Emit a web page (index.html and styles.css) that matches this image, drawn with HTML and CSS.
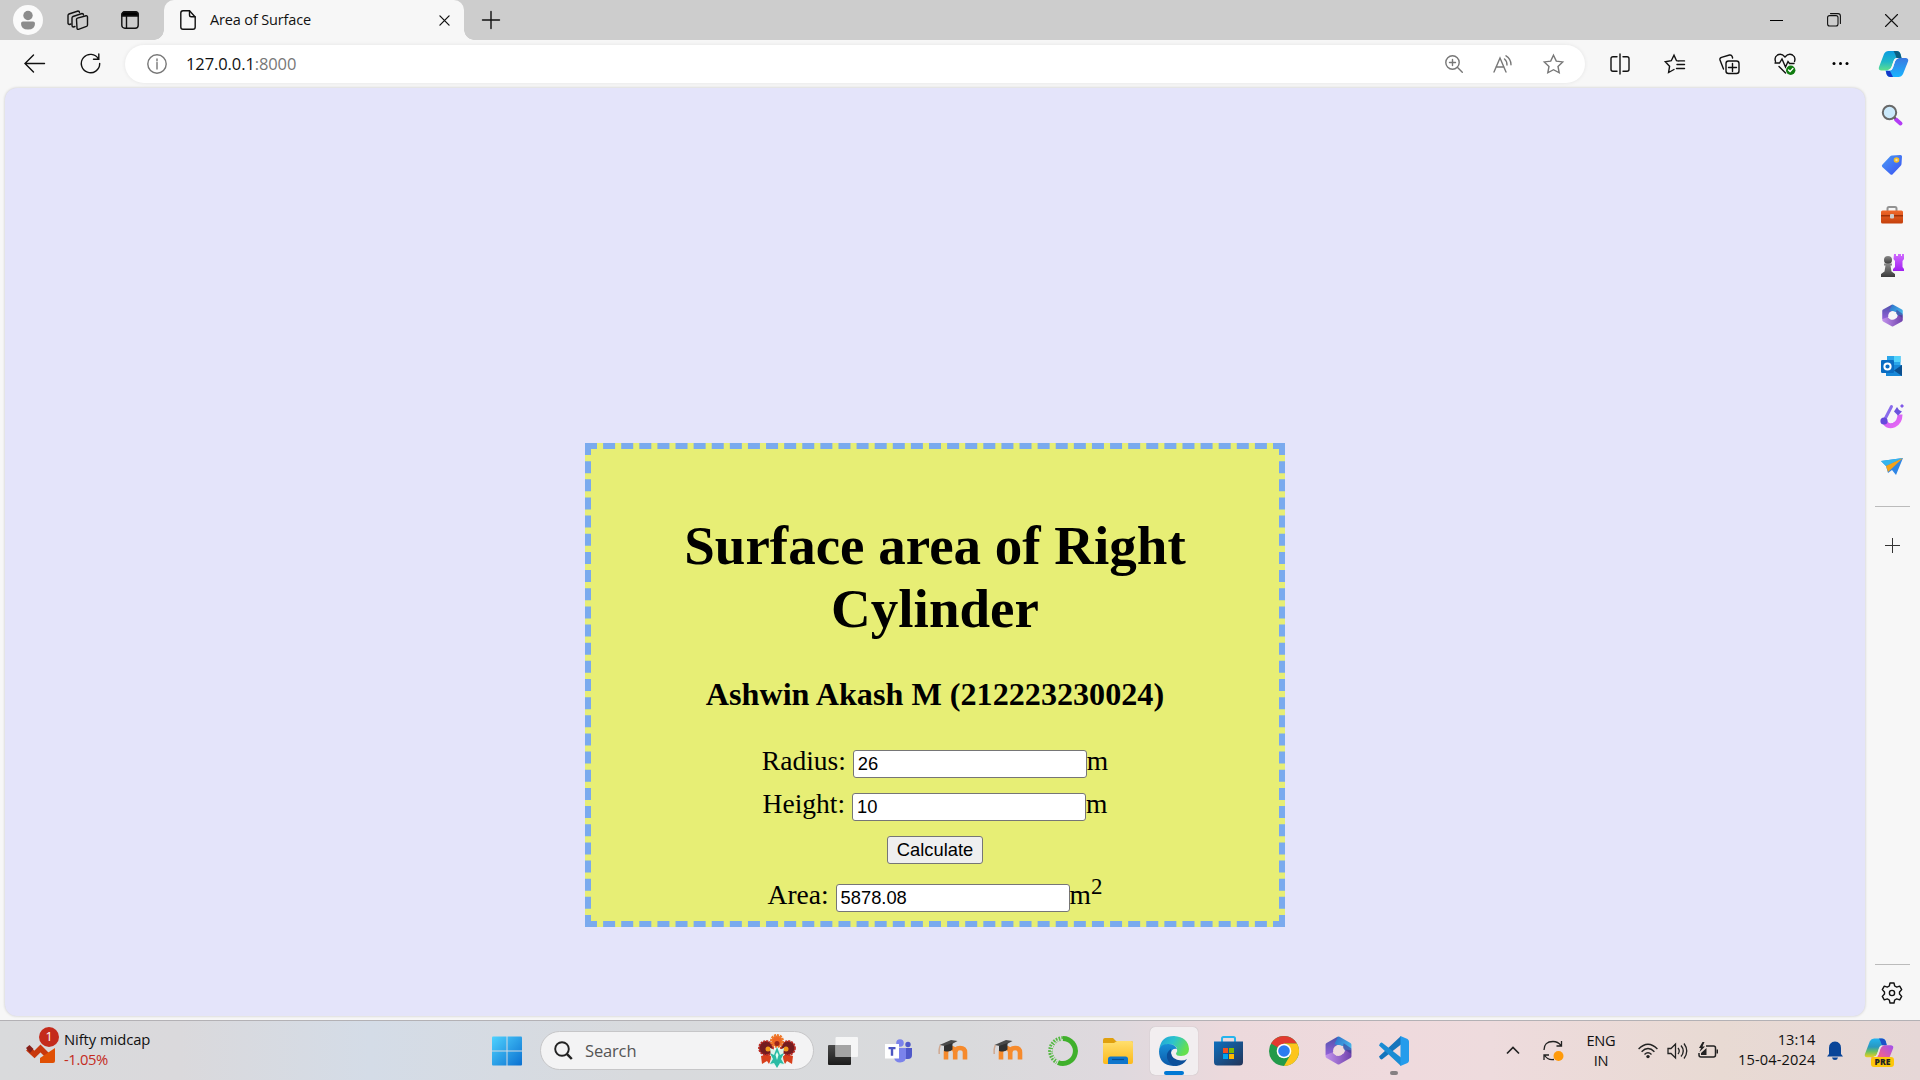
FILE: index.html
```html
<!DOCTYPE html>
<html lang="en">
<head>
<meta charset="utf-8">
<title>Area of Surface</title>
<link rel="stylesheet" href="styles.css">
</head>
<body>
<svg class="defs" width="0" height="0">
  <defs>
    <linearGradient id="blue" x1="0" y1="0" x2="30" y2="30" gradientUnits="userSpaceOnUse"><stop offset="0" stop-color="#4fd3ff"/><stop offset="1" stop-color="#0a6fd0"/></linearGradient>
    <linearGradient id="tag" x1="0" y1="0" x2="1" y2="1"><stop offset="0" stop-color="#4a9df5"/><stop offset="1" stop-color="#3b50f2"/></linearGradient>
    <linearGradient id="purple" x1="0" y1="0" x2="0" y2="1"><stop offset="0" stop-color="#d06bff"/><stop offset="1" stop-color="#a020f0"/></linearGradient>
    <linearGradient id="grey" x1="0" y1="0" x2="0" y2="1"><stop offset="0" stop-color="#8a8a8a"/><stop offset="1" stop-color="#3a3a3a"/></linearGradient>
    <linearGradient id="box" x1="0" y1="0" x2="0" y2="1"><stop offset="0" stop-color="#f0682a"/><stop offset="1" stop-color="#c4400c"/></linearGradient>
    <linearGradient id="design" x1="0" y1="0" x2="1" y2="1"><stop offset="0" stop-color="#c060f0"/><stop offset="1" stop-color="#ea68f5"/></linearGradient>
    <linearGradient id="copTop" x1="0" y1="0" x2="0" y2="1"><stop offset="0" stop-color="#0a9be0"/><stop offset=".55" stop-color="#20b8c8"/><stop offset="1" stop-color="#5fe08c"/></linearGradient>
    <linearGradient id="copBot" x1="0" y1="0" x2="0" y2="1"><stop offset="0" stop-color="#3a78e0"/><stop offset="1" stop-color="#18b4ff"/></linearGradient>
    <linearGradient id="preTop" x1="0" y1="0" x2="0" y2="1"><stop offset="0" stop-color="#22b4f0"/><stop offset=".45" stop-color="#2a98c0"/><stop offset=".7" stop-color="#6cc060"/><stop offset="1" stop-color="#f0d020"/></linearGradient>
    <linearGradient id="preBot" x1="1" y1="0" x2="0" y2="1"><stop offset="0" stop-color="#a050f0"/><stop offset=".6" stop-color="#f06090"/><stop offset="1" stop-color="#ff9a50"/></linearGradient>
    <linearGradient id="edgeTop" x1="0" y1="0" x2="1" y2=".4"><stop offset="0" stop-color="#1fa0dc"/><stop offset=".5" stop-color="#2cc4cc"/><stop offset="1" stop-color="#66e04e"/></linearGradient>
    <linearGradient id="edgeBot" x1="0" y1="0" x2="0" y2="1"><stop offset="0" stop-color="#1890d8"/><stop offset="1" stop-color="#0c58a8"/></linearGradient>
    <linearGradient id="folder" x1="0" y1="0" x2="0" y2="1"><stop offset="0" stop-color="#ffdf6e"/><stop offset="1" stop-color="#fcb91a"/></linearGradient>
    <linearGradient id="store" x1="0" y1="0" x2="1" y2="1"><stop offset="0" stop-color="#0d6fbe"/><stop offset="1" stop-color="#233458"/></linearGradient>
    <linearGradient id="hexA" x1="0" y1="0" x2="0" y2="1"><stop offset="0" stop-color="#4a50a8"/><stop offset="1" stop-color="#9a64dc"/></linearGradient>
    <linearGradient id="hexB" x1="0" y1="0" x2="1" y2="1"><stop offset="0" stop-color="#2a6cc8"/><stop offset="1" stop-color="#52d4f8"/></linearGradient>
    <linearGradient id="hexC" x1="0" y1="0" x2="1" y2="0"><stop offset="0" stop-color="#c898f0"/><stop offset="1" stop-color="#6a3ca8"/></linearGradient>
    <linearGradient id="dark" x1="0" y1="0" x2="0" y2="1"><stop offset="0" stop-color="#4a4a4a"/><stop offset="1" stop-color="#1c1c1c"/></linearGradient>
    <mask id="ring" maskUnits="userSpaceOnUse" x="0" y="0" width="28" height="28"><path d="M14 2.500 24.500 8.500v11L14 25.500 3.500 19.500v-11z" fill="#fff" stroke="#fff" stroke-width="4" stroke-linejoin="round"/><circle cx="14" cy="14" r="5.200" fill="#000"/></mask>
    <symbol id="m365" viewBox="0 0 28 28">
      <g mask="url(#ring)">
        <path d="M14 0H0v20l8-3 5-8 4-6z" fill="url(#hexA)"/>
        <path d="M12 0h16v20l-8-6-1-4-9-2 3-6z" fill="url(#hexB)"/>
        <path d="M28 14v14H0v-9l8-3 4 3 7-2 2-4z" fill="url(#hexC)"/>
        <path d="M18 12l10 6v-5l-9-6z" fill="#3f3c98" opacity=".6"/>
      </g>
    </symbol>
    <symbol id="moodle" viewBox="0 0 30 24">
      <path d="M8 20.500v-7q0-4.500 4.700-4.500 4.500 0 4.500 4.500v7m0-7q0-4.500 4.800-4.500 5 0 5 4.500v7" fill="none" stroke="#f68a2c" stroke-width="4.600"/>
      <path d="M1.500 6 13 1l6.500 1-10 5.500z" fill="#4a4a4a"/><path d="M6 7v5q6 1.500 8.500-1.500V4z" fill="#303030"/><path d="M2.500 6Q.8 9 1.200 15" stroke="#d0a890" fill="none" stroke-width="1.500"/>
    </symbol>
  </defs>
</svg>

<div class="screen">
  <header class="titlebar">
    <div class="slot profile"><svg width="30" height="30" viewBox="0 0 30 30"><circle cx="15" cy="15" r="15" fill="#fafafa"/><circle cx="15" cy="10.500" r="4.700" fill="#8c8c8c"/><path d="M8 18.500q0-2 2-2h10q2 0 2 2 0 6-7 6t-7-6z" fill="#8c8c8c"/></svg></div>
    <div class="slot workspaces"><svg width="22" height="22" viewBox="0 0 22 22" class="line"><path d="M9.500 10.500q0-1 1-1.300l8.500-2.400q1.500-.3 1.500 1.200v8q0 1-1 1.400l-8 2.900q-1.500.3-1.500-1.200z"/><path d="M8 17.500l-1.500.5Q5 18 5 16.500V9q0-1 1-1.500l9-3q1.500 0 1.500 1.500"/><path d="M4 15l-1.500.5Q1 15.500 1 14V6.500q0-1 1-1.500l9-3q1.500 0 1.500 1.500"/></svg></div>
    <div class="slot tabmenu"><svg width="18" height="18" viewBox="0 0 18 18" class="line"><rect x=".8" y=".8" width="16.400" height="16.400" rx="3"/><path d="M1 3.500Q1 1 3.500 1h11Q17 1 17 3.500V5H1z" fill="#000"/><path d="M5.500 5v12"/></svg></div>
    <div class="tab">
      <svg width="16" height="20" viewBox="0 0 16 20" class="line"><path d="M.8 3Q.8.800 3 .8h6.500L15.200 7v10q0 2.200-2.200 2.200H3Q.8 19.200.8 17z"/><path d="M9.500 1v4q0 1.800 1.800 1.800H15"/></svg>
      <span class="tab-title">Area of Surface</span>
      <svg width="11" height="11" viewBox="0 0 12 12" class="line"><path d="M1 1l10 10M11 1 1 11"/></svg>
    </div>
    <div class="slot newtab"><svg width="18" height="18" viewBox="0 0 18 18" class="line"><path d="M9 .5v17M.5 9h17"/></svg></div>
    <div class="window-buttons">
      <svg width="13" height="13" viewBox="0 0 13 13"><path d="M0 6h13v1H0z"/></svg>
      <svg width="14" height="14" viewBox="0 0 14 14" class="line thin"><rect x=".6" y="2.600" width="10.400" height="10.400" rx="2"/><path d="M3.500.6H11q2.400 0 2.400 2.400v7.500"/></svg>
      <svg width="13" height="13" viewBox="0 0 13 13" class="line thin"><path d="M.5.5l12 12m0-12-12 12"/></svg>
    </div>
  </header>

  <nav class="toolbar">
    <div class="nav-buttons">
      <svg width="21" height="19" viewBox="0 0 21 19" class="line"><path d="M20.500 9.500H1.500M9.500 1 1 9.500 9.500 18"/></svg>
      <svg width="21" height="21" viewBox="0 0 21 21" class="line"><path d="M18.500 6a9.200 9.200 0 1 0 1.200 4.500M18.800 1v5.300h-5.300"/></svg>
    </div>
    <div class="address">
      <svg width="20" height="20" viewBox="0 0 20 20" class="line muted"><circle cx="10" cy="10" r="9.200"/><path d="M10 8.500V15M10 5v1.800"/></svg>
      <span class="url">127.0.0.1<span class="port">:8000</span></span>
      <div class="address-actions">
        <svg width="18" height="18" viewBox="0 0 18 18" class="line muted"><circle cx="7.500" cy="7.500" r="6.700"/><path d="M12.300 12.300 17.300 17.300M7.500 4.500v6M4.500 7.500h6"/></svg>
        <svg width="20" height="18" viewBox="0 0 20 18" class="line muted"><path d="M1 17 7 3l6 14M3 12h8M11.500 4q2.500 2 2.500 6M13 .8q5 3 5 9"/></svg>
        <svg width="21" height="20" viewBox="0 0 21 20" class="line muted"><path d="M10.500 1.200l2.800 5.900 6.400.8-4.700 4.500 1.200 6.400-5.700-3.100-5.700 3.100L6 12.400 1.300 7.900l6.400-.8z"/></svg>
      </div>
    </div>
    <div class="tools">
      <svg width="20" height="20" viewBox="0 0 20 20" class="line"><path d="M7 2.700H3Q1 2.700 1 4.700v10.600q0 2 2 2h4M13 2.700h4q2 0 2 2v10.600q0 2-2 2h-4M10 0v20"/></svg>
      <svg width="21" height="20" viewBox="0 0 21 20" class="line"><path d="M15 7 12.500 6.700 10 1.200 7.300 6.700l-6 1 4.300 4.500-1 6.300 5.400-3M13 6.900h7.500M13 10.500h7.500M12.500 14.500h8"/></svg>
      <svg width="21" height="20" viewBox="0 0 21 20" class="line"><rect x="7" y="7" width="13" height="12.500" rx="2.500"/><path d="M13.500 9.500v8M9.500 13.500h8M4.500 15 1 6q-.5-2 1.500-2.700L10.500 1q2-.3 2.700 1.500l.4 1.500"/></svg>
      <svg width="22" height="22" viewBox="0 0 22 22" class="line"><path d="M1.500 8.500Q0 4 3.500 2 7.500 0 11 4q3.500-4 7.500-2 3.500 2 2 6.500M1 10h4.500L8 6l3.500 8L14 8.500l1.500 2H20M5 13.500l6.500 6.500"/><circle cx="16.700" cy="17.200" r="4.700" fill="#107c10" stroke="none"/><path d="M14.500 17l1.600 1.600 2.800-3" stroke="#fff"/></svg>
      <svg width="17" height="5" viewBox="0 0 17 5"><circle cx="2" cy="2.500" r="1.500"/><circle cx="8.500" cy="2.500" r="1.500"/><circle cx="15" cy="2.500" r="1.500"/></svg>
      <svg width="31" height="28" viewBox="0 0 31 28"><path d="M6 4Q7.500 1 10.500 1h8q3 0 4 3l1 4h-5q-2 0-3 3l-2 6q-1 3-4 3.500H3Q0 20 1 17z" fill="url(#copTop)"/><path d="M15.500 1h3q3 0 4 3l1 4h-5q-1.500-5-3-7z" fill="#0b5e80"/><path d="M25 24q-1.500 3-4.500 3h-8q-3 0-4-3l-1-3.500H12q2 0 3-3l2-6q1-3 4-3.500h7q3 .5 2 3.500z" fill="url(#copBot)"/><path d="M8 21h4l3 6h-2.500q-3 0-4-3z" fill="#1438c8"/><path d="M17.500 8.500h3.500q-3 0-4 3l-2 6q-1 2.500-2.500 2.800h-3q3-.3 4-3.300l2-5.500q.5-2.500 2-3z" fill="#f7f7f7"/></svg>
    </div>
  </nav>

  <div class="middle">
    <main class="viewport">
      <section class="card">
        <h1>Surface area of Right Cylinder</h1>
        <h3>Ashwin Akash M (212223230024)</h3>
        <form class="form">
          <div class="field">Radius: <input type="text" value="26">m</div>
          <div class="field">Height: <input type="text" value="10">m</div>
          <div class="action"><input type="button" value="Calculate"></div>
          <div class="field area">Area: <input type="text" value="5878.08">m<sup>2</sup></div>
        </form>
      </section>
    </main>

    <aside class="sidebar">
      <div class="apps">
        <svg width="22" height="22" viewBox="0 0 22 22"><path d="M15 15.500l4.500 4" stroke="#b33cf5" stroke-width="4" stroke-linecap="round"/><path d="M12 12l2.500 2.500" stroke="#555" stroke-width="2"/><circle cx="8.500" cy="8.500" r="6.700" fill="#cbe9fb" stroke="#686868" stroke-width="2"/></svg>
        <svg width="22" height="22" viewBox="0 0 22 22"><path d="M11 1.500 19.500 1q1.500 0 1.500 1.500L20.500 10q0 1-1 2l-7.800 8.300q-1.200 1-2.400 0L1.300 13q-1-1.200 0-2.300L9 2.500q1-1 2-1z" fill="url(#tag)"/><circle cx="15.500" cy="6" r="2" fill="#e8d8b8" stroke="#f8c020" stroke-width="1.600"/></svg>
        <svg width="24" height="20" viewBox="0 0 24 20"><path d="M7.500 6V3.500Q7.500 2 9 2h6q1.500 0 1.500 1.500V6" fill="none" stroke="#929292" stroke-width="2"/><rect x="1" y="5.500" width="22" height="13" rx="1.500" fill="url(#box)"/><path d="M1 10h22v1.500H1z" fill="#9f3208"/><rect x="10" y="9" width="4" height="4.500" rx="1" fill="#ccc"/></svg>
        <svg width="24" height="24" viewBox="0 0 24 24"><path d="M14 1h2v2h2V1h3v2h1V1h2v5l-1.500 2v6l1.500 2v2H13v-2l2-2V8l-1.500-2z" fill="url(#purple)"/><circle cx="8" cy="7" r="4" fill="url(#grey)"/><path d="M4 10.500h8v2h-1.500l1 6L15 21v3H1v-3l3.500-2.500 1-6H4z" fill="url(#grey)"/></svg>
        <svg width="23" height="23"><use href="#m365"/></svg>
        <svg width="22" height="22" viewBox="0 0 22 22"><path d="M6 1h13.500v14H6z" fill="#2aa6ea"/><path d="M13 1h6.500v6H13z" fill="#52d2fa"/><path d="M5 10h16v11H5z" fill="#1888d8"/><path d="M21 10v11l-8-5.500z" fill="#0b4f8f"/><rect x="0" y="5" width="13" height="13" rx="1.200" fill="#0a6cc2"/><circle cx="6.500" cy="11.500" r="3.100" fill="none" stroke="#fff" stroke-width="2"/></svg>
        <svg width="24" height="24" viewBox="0 0 24 24"><path d="M4.500 18q4 5.500 9.500 3 6-3 6-10.500" fill="none" stroke="url(#design)" stroke-width="5"/><path d="M4.500 16 11.500 2.500" stroke="#8a6cec" stroke-width="3" stroke-linecap="round"/><circle cx="4" cy="17" r="3.600" fill="#6648dc"/><path d="M17 3l2 3 3 1.500-4 4-4-4z" fill="#6a54dd"/><path d="M22 0l2 2-2 2-2-2z" fill="#8058e8"/></svg>
        <svg width="22" height="20" viewBox="0 0 22 20"><path d="M0 5 22 2 15 19l-4-5-4 3-2-7z" fill="#2f86e6"/><path d="M0 5 22 2 5 10z" fill="#36b6ee"/><path d="M5 10 22 2 7 16z" fill="#f5a31a"/></svg>
      </div>
      <hr>
      <svg class="add" width="15" height="15" viewBox="0 0 15 15"><path d="M7 0h1v15H7zM0 7h15v1H0z" fill="#333"/></svg>
      <div class="bottom">
        <hr>
        <svg width="22" height="22" viewBox="0 0 22 22" class="line"><path d="M9 1h4l.7 3 2 1.100 3-.9 2 3.400L18.500 10v2l2.200 2.400-2 3.400-3-.9-2 1.100L13 21H9l-.7-3-2-1.100-3 .9-2-3.400L3.500 12v-2L1.300 7.600l2-3.400 3 .9 2-1.100z" stroke-linejoin="round"/><circle cx="11" cy="11" r="2.600"/></svg>
      </div>
    </aside>
  </div>

  <footer class="taskbar">
    <div class="widget">
      <div class="stock"><svg width="32" height="26" viewBox="0 0 32 26"><path d="M3 10.500l6.500 6 6-6 7 7" fill="none" stroke="#c8380c" stroke-width="5.500"/><path d="M1 10 4.500 7l4 4L5 15z" fill="#86201a"/><path d="M15 25v-5l6-4 9-6v13q0 2-2 2z" fill="#e05004"/></svg><span class="badge">1</span></div>
      <div class="widget-text"><span class="name">Nifty midcap</span><span class="change">-1.05%</span></div>
    </div>
    <svg class="start" width="30" height="30" viewBox="0 0 30 30"><g fill="url(#blue)"><path d="M0 1.500Q0 .5 1 .5h13.500v14H0z"/><path d="M15.500.5H29q1 0 1 1v13H15.500z"/><path d="M0 15.500h14.500v14H1q-1 0-1-1z"/><path d="M15.500 15.500H30v13q0 1-1 1H15.500z"/></g></svg>
    <div class="search">
      <svg width="19" height="19" viewBox="0 0 19 19"><circle cx="8" cy="8" r="6.800" fill="none" stroke="#222" stroke-width="1.900"/><path d="M12.800 12.800l5 5.200" stroke="#222" stroke-width="2.500"/></svg>
      <span>Search</span>
      <svg width="38" height="34" viewBox="0 0 38 34"><path d="M3 22l7-2 4 3-3 7-2-3-5 3zM35 22l-7-2-4 3 3 7 2-3 5 3z" fill="#d8401c"/><circle cx="8" cy="14" r="7" fill="#741c20" stroke="#bd2b22" stroke-width="1.800" stroke-dasharray="2 1"/><circle cx="30" cy="14" r="7" fill="#741c20" stroke="#bd2b22" stroke-width="1.800" stroke-dasharray="2 1"/><circle cx="10" cy="15" r="2.500" fill="#f49a1c"/><circle cx="28" cy="15" r="2.500" fill="#f49a1c"/><circle cx="19" cy="7" r="5.500" fill="#ee6424" stroke="#ee7a2c" stroke-width="3" stroke-dasharray="2 .8"/><circle cx="19" cy="9.500" r="2.500" fill="#9c2418"/><path d="M12 14l5 2 2-3 2 3 5-2-1 9 1 8H12l1-8z" fill="#ddf4ec"/><path d="M19 13l3 8 4-2-3 6 3 5-4-1-3 5-3-5-4 1 3-5-3-6 4 2z" fill="#2bbba4"/><path d="M17.500 21l1.500 5 1.500-5-1.500-3z" fill="#e4fff2"/></svg>
    </div>
    <div class="pinned">
      <div class="app"><svg width="30" height="28" viewBox="0 0 30 28"><rect x="0" y="8" width="23" height="20" rx="1" fill="url(#dark)"/><rect x="7.500" y="0" width="22.500" height="20" rx="1" fill="#fff" opacity=".75"/><path d="M7.500 8H23v12H7.500z" fill="#a4a4a4"/></svg></div>
      <div class="app"><svg width="27" height="24" viewBox="0 0 27 24"><circle cx="15" cy="4" r="3.800" fill="#7b83eb"/><circle cx="23" cy="5.500" r="2.700" fill="#5059c9"/><path d="M19 9h8v7q0 4-4 4t-4-2z" fill="#5059c9"/><path d="M9 9h12v9q0 5-6 5.500-5 0-6-5z" fill="#7b83eb"/><rect x="0" y="5" width="14" height="14.500" fill="#fff"/><path d="M3.500 8h7v2.200H8.200v6.500H5.800v-6.500H3.500z" fill="#4c56c2"/></svg></div>
      <div class="app"><svg width="30" height="24"><use href="#moodle"/></svg></div>
      <div class="app"><svg width="30" height="24"><use href="#moodle"/></svg></div>
      <div class="app"><svg width="30" height="30" viewBox="0 0 30 30" fill="none"><path d="M15 2.500a12.500 12.500 0 1 1-5 24" stroke="#40b02c" stroke-width="5"/><path d="M15 2.500a12.500 12.500 0 0 0-6 23.500" stroke="#56b844" stroke-width="4.500" stroke-dasharray="1.600 1.100"/><path d="M15 4a11 11 0 0 0-5 21" stroke="#dcdcde" stroke-width="1.300" stroke-dasharray="2 2"/></svg></div>
      <div class="app"><svg width="30" height="28" viewBox="0 0 30 28"><path d="M0 6V3q0-2 2-2h8l3 3h15q2 0 2 2v4H0z" fill="#e0a00e"/><path d="M0 6h11l3-2h14q2 0 2 2v19q0 2-2 2H2q-2 0-2-2z" fill="url(#folder)"/><path d="M5 27v-5q0-2.500 2.500-2.500h15Q25 19.500 25 22v5z" fill="#0f76cc"/><path d="M9 22.500h12" stroke="#084f92" stroke-width="1.200"/></svg></div>
      <div class="app active"><svg width="30" height="30" viewBox="0 0 30 30"><path d="M.3 13Q2 0 15 0q14 1 15 13 0 7-8 7-5 0-5-2.500 2-3 .5-6Q14 7 8 8.500 2 10 .3 15z" fill="url(#edgeTop)"/><path d="M0 15Q1 8 8.500 8q7-.5 9.500 5-5-1-6 4 0 9 12 9-4 4-9.500 4Q0 29 0 15z" fill="url(#edgeBot)"/><path d="M12 13q-5 3-4 9 2 7 9 8 8-1 11-7-2 1.500-6 1.500-9-.5-10-7.500 0-3 0-4z" fill="#0c4f9a"/></svg></div>
      <div class="app"><svg width="29" height="30" viewBox="0 0 29 30"><path d="M8 6V2.500Q8 1 9.500 1h10Q21 1 21 2.500V6" fill="none" stroke="#26b4ec" stroke-width="2"/><path d="M0 5.500h29V26q0 3.500-3.500 3.500h-22Q0 29.500 0 26z" fill="url(#store)"/><path d="M9 12h5v5H9z" fill="#f25022"/><path d="M15 12h5v5h-5z" fill="#7fba00"/><path d="M9 18h5v5H9z" fill="#00a4ef"/><path d="M15 18h5v5h-5z" fill="#ffb900"/></svg></div>
      <div class="app"><svg width="30" height="30" viewBox="0 0 30 30"><circle cx="15" cy="15" r="15" fill="#229a4a"/><path d="M15 15 2 7.500A15 15 0 0 1 28 7.500H15z" fill="#e23a30"/><path d="M15 7.500h13A15 15 0 0 1 15 30l6.500-11.300z" fill="#fcc51c"/><circle cx="15" cy="15" r="7.300" fill="#fff"/><circle cx="15" cy="15" r="5.800" fill="#2b7cf0"/></svg></div>
      <div class="app"><svg width="29" height="29"><use href="#m365"/></svg></div>
      <div class="app running"><svg width="30" height="30" viewBox="0 0 30 30"><path d="M0 20.500 22 0v8.500L3.500 23Q2.500 24 1 22.500z" fill="#1474bc"/><path d="M0 9.500 22 30v-8.500L3.500 7Q2.500 6 1 7.500z" fill="#1a8cd4"/><path d="M21.500 0 28.500 3Q30 4 30 5.500v19q0 1.500-1.500 2.500l-7 3z" fill="#259cec"/></svg></div>
    </div>
    <div class="tray">
      <svg class="chevron" width="14" height="9" viewBox="0 0 14 9"><path d="M1 7.500l6-6 6 6" fill="none" stroke="#222" stroke-width="1.700"/></svg>
      <svg class="sync" width="21" height="22" viewBox="0 0 21 22"><path d="M1 10Q1 1.500 10 1.500q5 0 8 4M18.500 1v5h-5M1 20v-5h5M1.500 15q3 5.500 9.500 4.500" fill="none" stroke="#222" stroke-width="1.300"/><circle cx="15.500" cy="16" r="5" fill="#ff9a0a"/></svg>
      <div class="lang"><span>ENG</span><span>IN</span></div>
      <div class="status">
        <svg width="20" height="16" viewBox="0 0 20 16" fill="none" stroke="#222" stroke-width="1.400"><path d="M.6 6q9.400-9.500 18.800 0M3.600 8.800q6.400-6.500 12.800 0M6.500 11.500q3.500-3.300 7 0"/><circle cx="10" cy="13.600" r="1.700" fill="#222" stroke="none"/></svg>
        <svg width="21" height="18" viewBox="0 0 21 18" fill="none" stroke="#222" stroke-width="1.300"><path d="M1 6.500h3L8.500 2v14L4 11.500H1zM11 6q2.500 3 0 6M14 3.500q4.500 5.500 0 11M17 1.500q5.500 7.500 0 15"/></svg>
        <svg width="20" height="17" viewBox="0 0 20 17"><path d="M8 4h7.500q2 0 2 2v7q0 2-2 2H3q-2 0-2-2v-2" fill="none" stroke="#222" stroke-width="1.500"/><path d="M3 13V11L8.500 6v7zM18.500 7.500H20v4h-1.500zM4.500 0 1 6h2L1.500 10 7 4.500H4.500L6.500 0z" fill="#222"/></svg>
      </div>
      <div class="clock"><span>13:14</span><span>15-04-2024</span></div>
      <svg class="bell" width="16" height="20" viewBox="0 0 16 20"><path d="M2 13V7q0-6 6-6.500 6 .5 6 6.500v6l2 2.500H0zM5 16.500h6Q10.500 19 8 19t-3-2.500z" fill="#0a4598"/></svg>
      <div class="copilot"><svg width="30" height="28" viewBox="0 0 31 28"><path d="M6 4Q7.500 1 10.500 1h8q3 0 4 3l1 4h-5q-2 0-3 3l-2 6q-1 3-4 3.500H3Q0 20 1 17z" fill="url(#preTop)"/><path d="M15.500 1h3q3 0 4 3l1 4h-5q-1.500-5-3-7z" fill="#1c50c8"/><path d="M25 24q-1.500 3-4.500 3h-8q-3 0-4-3l-1-3.500H12q2 0 3-3l2-6q1-3 4-3.500h7q3 .5 2 3.500z" fill="url(#preBot)"/><path d="M17.500 8.500h3.500q-3 0-4 3l-2 6q-1 2.500-2.500 2.800h-3q3-.3 4-3.300l2-5.500q.5-2.500 2-3z" fill="#efe4e4"/></svg><span class="pre">PRE</span></div>
    </div>
  </footer>
</div>
</body>
</html>
```
FILE: styles.css
```css
* { box-sizing: border-box; }
body { margin: 0; font-family: "Open Sans", "Noto Sans", sans-serif; color: #111; overflow: hidden; }
svg { display: block; flex: none; overflow: visible; }
.defs { position: absolute; }
.line { fill: none; stroke: #111; stroke-width: 1.4; stroke-linecap: round; }
.line.thin { stroke-width: 1.1; }
.line.muted { stroke: #777; }

.screen { width: 1920px; height: 1080px; display: flex; flex-direction: column; background: #f7f7f7; }

.titlebar { height: 40px; flex: none; display: flex; background: #cdcdcd; }
.slot { display: flex; align-items: center; justify-content: center; }
.profile { width: 56px; }
.workspaces { width: 43px; }
.tabmenu { width: 62px; }
.tab { width: 300px; margin-left: 3px; padding: 0 14px 0 16px; display: flex; align-items: center; border-radius: 10px 10px 0 0; background: #f7f7f7; position: relative; }
.tab::before, .tab::after { content: ""; position: absolute; bottom: 0; width: 10px; height: 10px; }
.tab::before { left: -10px; background: radial-gradient(circle at 0 0, transparent 9.5px, #f7f7f7 10px); }
.tab::after { right: -10px; background: radial-gradient(circle at 100% 0, transparent 9.5px, #f7f7f7 10px); }
.tab-title { flex: 1; margin: -1px 0 0 14px; font-size: 14.5px; letter-spacing: -.15px; white-space: nowrap; }
.newtab { width: 53px; }
.window-buttons { margin-left: auto; padding-right: 22px; display: flex; align-items: center; gap: 44px; }

.toolbar { height: 47px; flex: none; display: flex; align-items: center; }
.nav-buttons { width: 125px; padding-left: 24px; display: flex; align-items: center; gap: 35px; }
.address { flex: none; width: 1460px; height: 38px; padding: 0 21px 0 22px; display: flex; align-items: center; border-radius: 19px; background: #fff; box-shadow: 0 0 4px rgba(0, 0, 0, .08); }
.nav-buttons { flex: none; }
.url { margin: -1px 0 0 19px; font-size: 16.5px; letter-spacing: -.1px; }
.port { color: #777; }
.address-actions { margin-left: auto; display: flex; align-items: center; gap: 30px; }
.tools { flex: none; margin-left: 7px; display: grid; grid-template-columns: repeat(5, 55.2px) 51px; place-items: center; }

.middle { flex: 1; min-height: 0; display: flex; }
.viewport { width: 1860px; height: 928px; margin: 1px 0 0 5px; border-radius: 12px; background: #e4e4fa; box-shadow: 0 0 3px rgba(0, 0, 0, .2); font-family: "Liberation Serif", "Times New Roman", serif; color: #000; }
.card { width: 700px; height: 484px; margin: 355px auto 0; padding: 65px 60px 0; border: 6px dashed #7aaaee; background: #e7ee75; text-align: center; font-size: 27.5px; }
.card h1 { margin: 0; font-size: 55px; line-height: 63px; }
.card h3 { margin: 36px 0 0; font-size: 32.175px; line-height: 37px; }
.form { margin-top: 32px; }
.field { height: 43px; line-height: 32px; white-space: nowrap; }
.field input { width: 234px; height: 28px; padding: 1px 4px; border: 1px solid #767676; border-radius: 3px; background: #fff; font: 18.33px "Liberation Sans", Arial, sans-serif; color: #000; }
.action { height: 43px; display: flex; justify-content: center; align-items: flex-start; padding-top: 5px; }
.action input { width: 96px; height: 28px; padding: 0; border: 1px solid #767676; border-radius: 3px; background: #efefef; font: 18.33px "Liberation Sans", Arial, sans-serif; color: #000; }
.area { margin-top: 5px; }
.area sup { font-size: 22.9px; line-height: 0; }

.sidebar { flex: 1; padding: 3px 1px 0 0; display: flex; flex-direction: column; align-items: center; }
.apps { display: grid; grid-auto-rows: 50.1px; place-items: center; }
.sidebar hr { width: 35px; height: 1px; margin: 15px 0 0; border: 0; background: #bbb; }
.add { margin-top: 31px; }
.bottom { margin-top: auto; padding-bottom: 16px; display: flex; flex-direction: column; align-items: center; gap: 17px; }

.taskbar { height: 60px; flex: none; display: flex; align-items: center; border-top: 1px solid #b3b1b5; background: linear-gradient(90deg, #d9dadc 0, #dad9dc 180px, #d4dce7 370px, #d8dadd 640px, #d9dadc 960px, #dfd9de 1120px, #ecd9dc 1230px, #efdadd 1400px, #eedbdd 1490px, #e8dad3 1720px, #e6d7d7 1920px); }
.widget { width: 492px; padding-left: 25px; display: flex; align-items: center; }
.stock { position: relative; padding-top: 1px; }
.badge { position: absolute; left: 14px; top: -10px; width: 20px; height: 20px; border-radius: 50%; background: #c42b1c; color: #fff; font-size: 12.5px; line-height: 20px; text-align: center; }
.widget-text { margin: -4px 0 0 7px; display: flex; flex-direction: column; font-size: 14.8px; line-height: 20px; letter-spacing: -.08px; }
.change { color: #c42b1c; letter-spacing: -.4px; }
.search { width: 274px; height: 39px; margin-left: 18px; padding: 0 17px 0 13px; display: flex; align-items: center; border: 1px solid #c6c6c8; border-radius: 20px; background: #f3f3f4; }
.search span { flex: 1; margin-left: 12px; font-size: 16.5px; letter-spacing: -.15px; color: #555; }
.pinned { margin-left: 5px; display: flex; gap: 7.1px; }
.app { width: 48px; height: 48px; display: flex; align-items: center; justify-content: center; border-radius: 5px; position: relative; }
.active { background: #f2eef0; box-shadow: 0 0 1px #aaa; }
.active::after, .running::after { content: ""; position: absolute; bottom: 0; height: 4px; border-radius: 2px; }
.active::after { width: 20px; background: #0078d4; }
.running::after { width: 8px; background: #868082; }
.tray { flex: 1; margin-left: 88px; display: flex; align-items: center; font-size: 14.6px; line-height: 20px; }
.sync { margin-left: 23px; }
.lang { width: 50px; margin: -2px 0 0 12px; display: flex; flex-direction: column; align-items: center; letter-spacing: -.3px; }
.status { margin-left: 12px; display: flex; align-items: center; gap: 9.5px; }
.clock { width: 97.5px; margin-top: -4px; display: flex; flex-direction: column; align-items: flex-end; letter-spacing: .12px; }
.bell { margin-left: 11.5px; }
.copilot { margin-left: 21px; position: relative; }
.pre { position: absolute; left: 7px; bottom: -2px; width: 23px; height: 10px; border-radius: 3px; background: #fdc60a; font-size: 8.5px; font-weight: 800; line-height: 10px; text-align: center; color: #222; }
```
